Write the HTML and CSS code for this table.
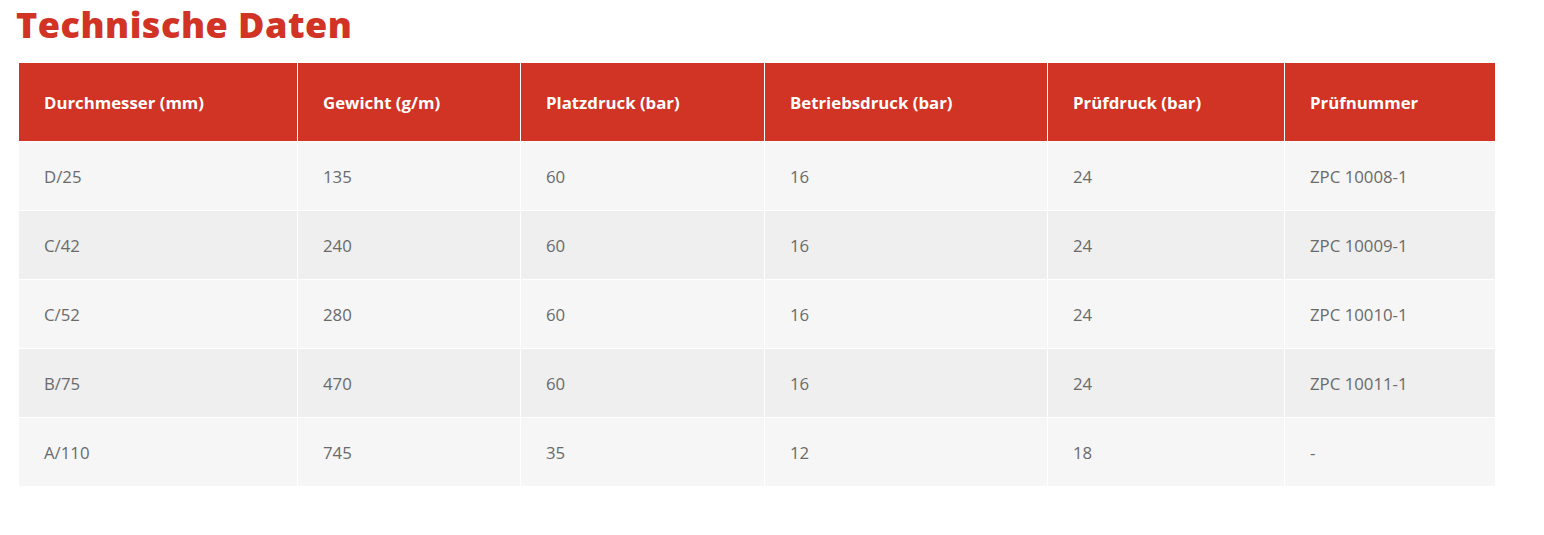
FILE: index.html
```html
<!DOCTYPE html>
<html lang="de">
<head>
<meta charset="utf-8">
<title>Technische Daten</title>
<link rel="stylesheet" href="styles.css">
</head>
<body>
<div class="page">
  <h2 class="title">Technische Daten</h2>
  <table class="specs">
    <colgroup>
      <col class="c1"><col class="c2"><col class="c3"><col class="c4"><col class="c5"><col class="c6">
    </colgroup>
    <thead>
      <tr>
        <th>Durchmesser (mm)</th>
        <th>Gewicht (g/m)</th>
        <th>Platzdruck (bar)</th>
        <th>Betriebsdruck (bar)</th>
        <th>Prüfdruck (bar)</th>
        <th>Prüfnummer</th>
      </tr>
    </thead>
    <tbody>
      <tr><td>D/25</td><td>135</td><td>60</td><td>16</td><td>24</td><td>ZPC 10008-1</td></tr>
      <tr><td>C/42</td><td>240</td><td>60</td><td>16</td><td>24</td><td>ZPC 10009-1</td></tr>
      <tr><td>C/52</td><td>280</td><td>60</td><td>16</td><td>24</td><td>ZPC 10010-1</td></tr>
      <tr><td>B/75</td><td>470</td><td>60</td><td>16</td><td>24</td><td>ZPC 10011-1</td></tr>
      <tr><td>A/110</td><td>745</td><td>35</td><td>12</td><td>18</td><td>-</td></tr>
    </tbody>
  </table>
</div>
</body>
</html>
```
FILE: styles.css
```css
html, body {
  margin: 0;
  padding: 0;
  background: #fff;
}
.page {
  padding: 4px 0 0 18px;
  font-family: "Open Sans", "Liberation Sans", sans-serif;
}
.title {
  margin: 0 0 16px -2px;
  font-family: "Open Sans", "DejaVu Sans", sans-serif;
  font-weight: 800;
  font-size: 36px;
  line-height: 42px;
  letter-spacing: 0.5px;
  color: #d13324;
}
.specs {
  border-collapse: collapse;
  table-layout: fixed;
  width: 1477px;
}
.c1 { width: 279px; }
.c2 { width: 223px; }
.c3 { width: 244px; }
.c4 { width: 283px; }
.c5 { width: 237px; }
.c6 { width: 211px; }
.specs th,
.specs td {
  border: 1px solid #fff;
  padding: 0 25px;
  text-align: left;
  font-size: 16.8px;
}
.specs th {
  height: 78px;
  background: #d13324;
  color: #fff;
  font-weight: 700;
}
.specs td {
  height: 68px;
  color: #6a6a6a;
  font-weight: 400;
}
.specs tbody tr:nth-child(odd) td { background: #f6f6f6; }
.specs tbody tr:nth-child(even) td { background: #efefef; }
```
